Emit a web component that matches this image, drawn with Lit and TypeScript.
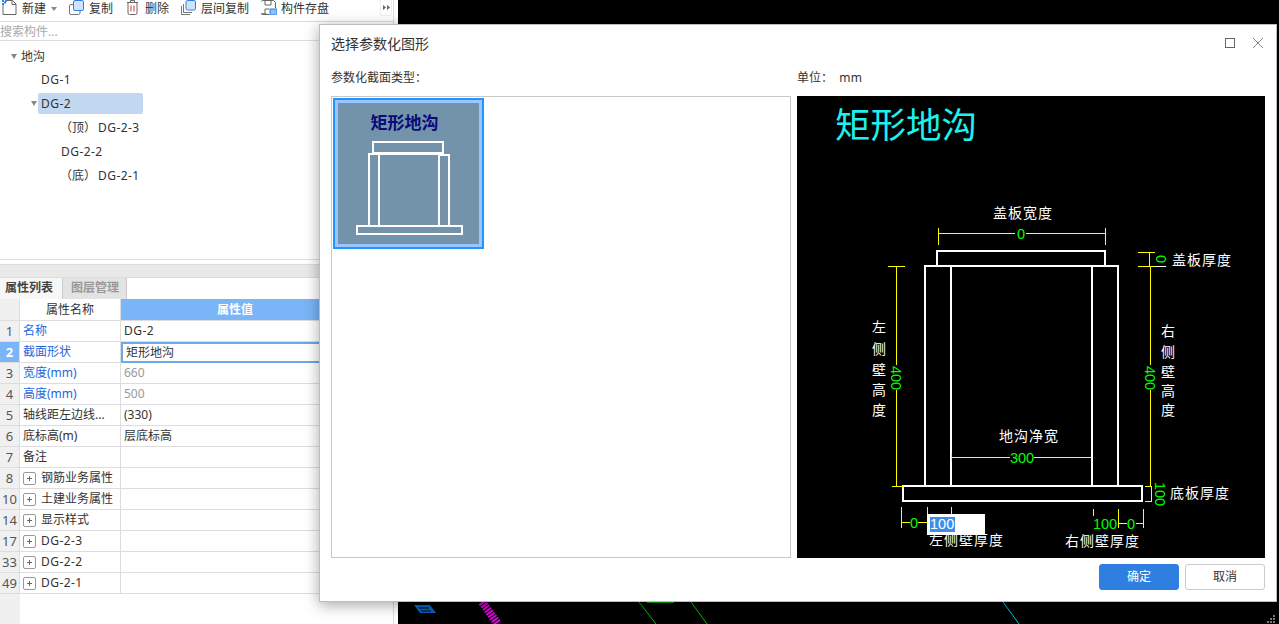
import { LitElement, html, css } from "lit";
import { customElement } from "lit/decorators.js";

type Row = { n: string; name: string; val?: string; kind?: "link" | "muted" | "expand"; sel?: boolean; gray?: boolean; dg?: boolean };

const rows: Row[] = [
  { n: "1", name: "名称", val: "DG-2", kind: "link", dg: true },
  { n: "2", name: "截面形状", val: "矩形地沟", kind: "link", sel: true },
  { n: "3", name: "宽度(mm)", val: "660", kind: "link", gray: true },
  { n: "4", name: "高度(mm)", val: "500", kind: "link", gray: true },
  { n: "5", name: "轴线距左边线...", val: "(330)" },
  { n: "6", name: "底标高(m)", val: "层底标高" },
  { n: "7", name: "备注" },
  { n: "8", name: "钢筋业务属性", kind: "expand" },
  { n: "10", name: "土建业务属性", kind: "expand" },
  { n: "14", name: "显示样式", kind: "expand" },
  { n: "17", name: "DG-2-3", kind: "expand", dg: true },
  { n: "33", name: "DG-2-2", kind: "expand", dg: true },
  { n: "49", name: "DG-2-1", kind: "expand", dg: true },
];

const icons = {
  doc: html`<svg class="ic" viewBox="0 0 15 15"><path d="M1 3V14.5H14V4L10.5 0.5H5" fill="#fff" stroke="#666"/><path d="M10 0.5V4.5H14" fill="none" stroke="#666"/><path d="M0 0h2v2H0zM3 0h2v2H3zM0 3h2v2H0zM2 1.5h2v2H2z" fill="#2f86e6"/></svg>`,
  copy: html`<svg class="ic" viewBox="0 0 15 15"><rect x="0.5" y="4.5" width="10.5" height="10" rx="1.5" fill="#fff" stroke="#777"/><rect x="4.5" y="0.5" width="10" height="10" rx="1.5" fill="#cfe3fb" stroke="#2f7fe0"/></svg>`,
  bin: html`<svg class="ic" viewBox="0 0 15 15"><path d="M3 2.5V13a1.5 1.5 0 0 0 1.5 1.5h6A1.5 1.5 0 0 0 12 13V2.5M2 2.5H13M5.5 2.5V0.5H9.5V2.5" fill="none" stroke="#666"/><path d="M6 5.5V11.5M9 5.5V11.5" stroke="#d8333a" fill="none"/></svg>`,
  layers: html`<svg class="ic" viewBox="0 0 15 15"><path d="M0.5 6V14.5H9" fill="none" stroke="#777"/><path d="M2.5 4V12.5H11" fill="none" stroke="#777"/><rect x="5" y="0.5" width="9.5" height="9.5" rx="1.5" fill="#cfe3fb" stroke="#2f7fe0"/></svg>`,
  save: html`<svg class="ic wide" viewBox="0 0 16 15"><path d="M0.5 1.5a1 1 0 0 1 1-1H12.5L14.5 2.5V8M8 14.5H1.5a1 1 0 0 1-1-1Z" fill="#fff" stroke="#666"/><path d="M4 0.5V5H10V0.5M4 14.5V9H8" fill="none" stroke="#666"/><rect x="9" y="9" width="7" height="6" fill="#8fc0f2" stroke="#2f7fe0" stroke-width="1"/></svg>`,
};

@customElement("app-root")
export class AppRoot extends LitElement {
  static styles = css`
    :host {
      display: block;
      position: relative;
      width: 1279px;
      height: 624px;
      overflow: hidden;
      background: #000;
      font-family: "Noto Sans", "Noto Sans CJK SC", sans-serif;
      font-size: 12px;
      color: #333;
    }
    .app { display: grid; grid-template-columns: 398px 1fr; height: 624px; }
    .left { display: flex; flex-direction: column; background: #fff; height: 624px; padding-right: 4px; box-sizing: border-box; }
    .pane { display: flex; flex-direction: column; flex: 1; border-right: 1px solid #ddd; min-height: 0; }
    .toolbar { display: flex; align-items: flex-start; gap: 12px; height: 21px; padding-left: 2px; border-bottom: 1px solid #ddd; }
    .tool { display: flex; align-items: flex-start; gap: 5px; height: 18px; line-height: 18px; white-space: nowrap; }
    .ic { width: 15px; height: 15px; flex: none; }
    .ic.wide { width: 16px; margin-right: -1px; }
    .caret { width: 11px; height: 18px; display: flex; justify-content: flex-end; align-items: center; margin-left: -12px; }
    .caret::after { content: ""; border: 3px solid transparent; border-top: 4px solid #888; border-bottom: 0; }
    .more { margin-left: auto; margin-right: 1px; width: 12px; height: 16px; border: 1px solid #eee; border-top: 0; border-radius: 0 0 2px 2px; box-sizing: border-box; display: flex; align-items: center; justify-content: center; }
    .more svg { display: block; width: 7px; height: 5px; }
    .search { height: 18px; line-height: 20px; color: #aaa; border-bottom: 1px solid #ddd; }
    .tree { height: 216px; padding-top: 2px; border-bottom: 1px solid #ddd; }
    .node { height: 24px; display: flex; align-items: center; white-space: nowrap; box-sizing: border-box; }
    .tw { width: 0; height: 0; border: 3px solid transparent; border-top: 5px solid #888; border-bottom: 0; flex: none; }
    .n0 { padding: 2px 0 0 11px; }
    .n0 .tw { margin-right: 4px; }
    .n1 { padding-left: 41px; }
    .n1b { padding-left: 31px; }
    .n1b .tw { margin-right: 1px; }
    .pill { background: #c1d8f0; width: 102px; height: 21px; line-height: 21px; border-radius: 2px; padding-left: 3px; }
    .n2 { padding-left: 60px; }
    .n2b { padding-left: 61px; }
    .lat { letter-spacing: 0.45px; }
    .n2 .lat { margin-left: 2px; }
    .band { margin-top: 4px; height: 12px; background: #e9e9e9; border-top: 1px solid #ddd; }
    .tabs { display: flex; height: 21px; background: #fff; border-top: 1px solid #ddd; }
    .tab { height: 21px; line-height: 20px; font-weight: 700; box-sizing: border-box; }
    .tab.on { width: 62px; padding-left: 5px; background: #f7f7f7; color: #444; }
    .tab.off { width: 65px; padding-left: 8px; background: #e3e3e3; color: #999; border-left: 1px solid #ccc; border-right: 1px solid #ccc; }
    .grid { display: grid; grid-template-columns: 20px 101px 1fr; }
    .c { height: 21px; line-height: 20px; box-sizing: border-box; border-bottom: 1px solid #ddd; border-right: 1px solid #ddd; white-space: nowrap; overflow: hidden; }
    .c:nth-child(3n) { border-right: 0; }
    .g { background: #f0f0f0; text-align: center; color: #555; font-size: 13px; }
    .g.sel { background: #7ab5f8; color: #fff; font-weight: 700; }
    .h { text-align: center; height: 22px; line-height: 22px; }
    .h.v { background: #7ab5f8; color: #fff; font-weight: 700; padding-right: 44px; }
    .nm { padding-left: 3px; }
    .nm.link { color: #2566dc; }
    .nm.expand { display: flex; align-items: center; }
    .plus { width: 13px; height: 13px; box-sizing: border-box; border: 1px solid #999; border-radius: 2px; margin-right: 5px; position: relative; flex: none; }
    .plus::before { content: ""; position: absolute; left: 3px; right: 3px; top: 5px; height: 1px; background: #666; }
    .plus::after { content: ""; position: absolute; top: 3px; bottom: 3px; left: 5px; width: 1px; background: #666; }
    .vl { padding-left: 3px; }
    .vl.muted { color: #999; }
    .vl.sel { border: 2px solid #6ea8e8; border-right: 0; line-height: 17px; }
    .fill { flex: 1; }
    .gut { width: 20px; height: 100%; background: #f0f0f0; }
    .canvas { display: block; width: 881px; height: 624px; }

    .dlg { position: absolute; left: 319px; top: 24px; width: 958px; height: 578px; box-sizing: border-box; background: #fff; border: 1px solid #bdbdbd; box-shadow: 0 3px 14px rgba(0, 0, 0, 0.35); padding: 0 11px; display: flex; flex-direction: column; }
    .dh { height: 35px; display: flex; align-items: center; font-size: 14px; }
    .dh .t { flex: 1; }
    .dh svg { display: block; }
    .dacts { display: flex; gap: 18px; margin: 1px 2px 0 0; }
    .labels { height: 36px; display: grid; grid-template-columns: 460px 468px; column-gap: 6px; align-items: center; padding-bottom: 2px; box-sizing: border-box; }
    .mm { margin-left: 3px; letter-spacing: 0.45px; }
    .body { display: grid; grid-template-columns: 460px 468px; column-gap: 6px; height: 462px; }
    .list { border: 1px solid #c8c8c8; padding: 1px; box-sizing: border-box; }
    .thumb { width: 151px; height: 151px; box-sizing: border-box; border: 2px solid #1e96ff; }
    .thumb-in { border: 3px solid #9cc4ff; background: #7293aa; }
    .thumb svg { display: block; width: 141px; height: 141px; }
    .pv { position: relative; background: #000; }
    .pv svg { display: block; width: 468px; height: 462px; }
    .edit { position: absolute; left: 130px; top: 418px; width: 58px; height: 21px; box-sizing: border-box; background: #fff; padding: 3px; display: flex; }
    .edit span { background: #3c8fe8; color: #fff; font-family: "Liberation Sans", sans-serif; font-size: 14.5px; line-height: 15px; width: 25px; height: 15px; }
    .foot { display: flex; justify-content: flex-end; gap: 6px; padding-top: 6px; position: relative; }
    .btn { width: 80px; height: 26px; line-height: 24px; text-align: center; border-radius: 3px; box-sizing: border-box; border: 1px solid #ccc; background: #fff; color: #333; }
    .btn.pri { background: #2e7fe0; border-color: #2e7fe0; color: #fff; }
    .grip { position: absolute; right: -10px; bottom: -33px; width: 8px; height: 8px; }
    .cad { font-family: "Noto Sans CJK SC", sans-serif; font-size: 14px; fill: #fff; letter-spacing: 1px; }
    .num { font-family: "Liberation Sans", sans-serif; font-size: 14.5px; fill: #00ff00; }
  `;

  render() {
    return html`
      <div class="app">
        <div class="left">
          <div class="pane">
            <div class="toolbar">
              <div class="tool">${icons.doc}<span>新建</span></div>
              <div class="caret"></div>
              <div class="tool">${icons.copy}<span>复制</span></div>
              <div class="tool">${icons.bin}<span>删除</span></div>
              <div class="tool">${icons.layers}<span>层间复制</span></div>
              <div class="tool">${icons.save}<span>构件存盘</span></div>
              <div class="more"><svg viewBox="0 0 7 5"><path d="M0 0L3 2.5L0 5ZM4 0L7 2.5L4 5Z" fill="#666"/></svg></div>
            </div>
            <div class="search">搜索构件...</div>
            <div class="tree">
              <div class="node n0"><i class="tw"></i>地沟</div>
              <div class="node n1"><span class="lat">DG-1</span></div>
              <div class="node n1b"><i class="tw"></i><div class="pill lat">DG-2</div></div>
              <div class="node n2">（顶）<span class="lat">DG-2-3</span></div>
              <div class="node n2b"><span class="lat">DG-2-2</span></div>
              <div class="node n2">（底）<span class="lat">DG-2-1</span></div>
            </div>
            <div class="band"></div>
            <div class="tabs">
              <div class="tab on">属性列表</div>
              <div class="tab off">图层管理</div>
            </div>
            <div class="grid">
              <div class="c g h"></div>
              <div class="c h">属性名称</div>
              <div class="c h v">属性值</div>
              ${rows.map(
                (r) => html`
                  <div class="c g ${r.sel ? "sel" : ""}">${r.n}</div>
                  <div class="c nm ${r.kind ?? ""}">
                    ${r.kind === "expand" ? html`<i class="plus"></i>` : ""}
                    ${r.kind === "expand" && r.dg ? html`<span class="lat">${r.name}</span>` : r.name}
                  </div>
                  <div class="c vl ${r.gray ? "muted" : ""} ${r.sel ? "sel" : ""} ${r.dg && r.val ? "lat" : ""}">${r.val ?? ""}</div>
                `
              )}
            </div>
            <div class="fill"><div class="gut"></div></div>
          </div>
        </div>
        <svg class="canvas" viewBox="398 0 881 624">
          <rect x="398" y="0" width="881" height="624" fill="#000"/>
          <path d="M414 605H430L436 613H420Z" fill="#0a62c0"/>
          <path d="M419 608H429M421 611H431" stroke="#000" stroke-width="1"/>
          <path d="M482 602L498 624" stroke="#e000e0" stroke-width="8" stroke-dasharray="2 1"/>
          <path d="M639 602L656 624M691 602L707 624" stroke="#00c000"/>
          <path d="M647 602.5H674" stroke="#00a000"/>
          <path d="M1003 602L1019 624" stroke="#00c8d8"/>
        </svg>
      </div>

      <div class="dlg">
        <div class="dh">
          <span class="t">选择参数化图形</span>
          <div class="dacts">
            <svg width="10" height="10" viewBox="0 0 10 10"><rect x="0.5" y="0.5" width="9" height="9" fill="none" stroke="#666"/></svg>
            <svg width="10" height="10" viewBox="0 0 10 10"><path d="M0 0L10 10M10 0L0 10" stroke="#888" fill="none"/></svg>
          </div>
        </div>
        <div class="labels">
          <span>参数化截面类型：</span>
          <span>单位： <span class="mm">mm</span></span>
        </div>
        <div class="body">
          <div class="list">
            <div class="thumb">
              <div class="thumb-in">
                <svg viewBox="338 103 141 141">
                  <text x="404.5" y="129" text-anchor="middle" font-family="Noto Sans CJK SC, serif" font-weight="700" font-size="17" fill="#0a0a7a">矩形地沟</text>
                  <g fill="none" stroke="#fff" stroke-width="2" shape-rendering="crispEdges">
                    <rect x="373" y="142" width="70" height="11"/>
                    <path d="M369 226V154H379V226M379 154H439V226M439 155H449V226"/>
                    <rect x="357" y="226" width="105" height="8"/>
                  </g>
                </svg>
              </div>
            </div>
          </div>
          <div class="pv">
            <svg viewBox="797 96 468 462">
              <text x="835" y="138" font-family="Noto Sans CJK SC, sans-serif" font-size="35.5" fill="#1ef0f0">矩形地沟</text>

              <g fill="none" stroke="#fff" stroke-width="2" shape-rendering="crispEdges">
                <path d="M937 266V251H1105V266"/>
                <path d="M925 486V266H1118V486M951 266V486M1092 266V486"/>
                <rect x="903" y="486" width="239" height="15"/>
              </g>

              <g fill="none" stroke="#ffff00" stroke-width="1" shape-rendering="crispEdges">
                <path d="M938.5 228V245M1105.5 228V245M938 233.5H1015M1026 233.5H1105"/>
                <path d="M888 266.5H905M896.5 266V365M896.5 390V486M892 486.5H903"/>
                <path d="M1138 252.5H1155M1138 266.5H1155M1149.5 252V266M1150.5 267V365M1150.5 390V486"/>
                <path d="M1145 486.5H1151.5V501.5H1145"/>
                <path d="M951 457.5H1010M1034 457.5H1092M951.5 453V462"/>
                <path d="M901.5 507V528M901 522.5H910M918 522.5H927M927.5 507V514M951.5 507V514"/>
                <path d="M1093.5 509V516M1118.5 509V528M1143.5 509V528M1118 523.5H1127M1136 523.5H1143"/>
              </g>
              <path d="M1155 266.5H1166" stroke="#fff" shape-rendering="crispEdges"/>

              <text class="num" x="1021" y="239" text-anchor="middle">0</text>
              <text class="num" transform="translate(1156 259) rotate(90)" text-anchor="middle">0</text>
              <text class="num" transform="translate(891 378) rotate(90)" text-anchor="middle">400</text>
              <text class="num" transform="translate(1145 378) rotate(90)" text-anchor="middle">400</text>
              <text class="num" transform="translate(1155 494) rotate(90)" text-anchor="middle">100</text>
              <text class="num" x="1022" y="463" text-anchor="middle">300</text>
              <text class="num" x="914" y="528" text-anchor="middle">0</text>
              <text class="num" x="1105" y="529" text-anchor="middle">100</text>
              <text class="num" x="1131" y="529" text-anchor="middle">0</text>

              <text class="cad" x="993" y="218">盖板宽度</text>
              <text class="cad" x="1172" y="265">盖板厚度</text>
              <text class="cad" x="999" y="441">地沟净宽</text>
              <text class="cad" x="1170" y="498">底板厚度</text>
              <text class="cad" x="929" y="545">左侧壁厚度</text>
              <text class="cad" x="1065" y="546">右侧壁厚度</text>
              <g>
                <text class="cad" x="872" y="332">左</text>
                <text class="cad" x="872" y="354">侧</text>
                <text class="cad" x="872" y="375">壁</text>
                <text class="cad" x="872" y="395">高</text>
                <text class="cad" x="872" y="415">度</text>
                <text class="cad" x="1161" y="336">右</text>
                <text class="cad" x="1161" y="357">侧</text>
                <text class="cad" x="1161" y="377">壁</text>
                <text class="cad" x="1161" y="396">高</text>
                <text class="cad" x="1161" y="415">度</text>
              </g>
            </svg>
            <div class="edit"><span>100</span></div>
          </div>
        </div>
        <div class="foot">
          <div class="btn pri">确定</div>
          <div class="btn">取消</div>
          <svg class="grip" viewBox="0 0 8 8"><path d="M6 0h2v2H6zM3 3h2v2H3zM6 3h2v2H6zM0 6h2v2H0zM3 6h2v2H3zM6 6h2v2H6z" fill="#777"/></svg>
        </div>
      </div>
    `;
  }
}
